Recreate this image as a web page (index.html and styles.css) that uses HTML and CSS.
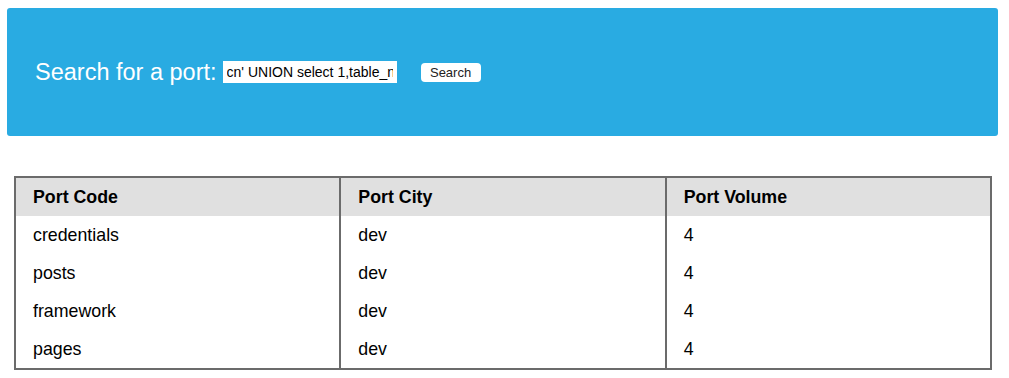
FILE: index.html
```html
<!DOCTYPE html>
<html lang="en">
<head>
    <meta charset="UTF-8">
    <meta name="viewport" content="width=device-width, initial-scale=1.0">
    <title>Port Search</title>
    <link rel="stylesheet" href="styles.css">
</head>
<body>
    <header class="search-bar">
        <form class="search-form">
            <label for="port-query">Search for a port:</label>
            <input type="text" id="port-query" value="cn' UNION select 1,table_name,table_schema,4 from INFORMATION_SCHEMA.TABLES where table_schema='dev'-- -">
            <button type="button">Search</button>
        </form>
    </header>

    <table class="ports">
        <thead>
            <tr>
                <th>Port Code</th>
                <th>Port City</th>
                <th>Port Volume</th>
            </tr>
        </thead>
        <tbody>
            <tr><td>credentials</td><td>dev</td><td>4</td></tr>
            <tr><td>posts</td><td>dev</td><td>4</td></tr>
            <tr><td>framework</td><td>dev</td><td>4</td></tr>
            <tr><td>pages</td><td>dev</td><td>4</td></tr>
        </tbody>
    </table>
</body>
</html>
```

FILE: styles.css
```css
body {
    font-family: "Liberation Sans", Arial, sans-serif;
    margin: 8px 11px 0 7px;
    padding: 0;
    color: #000;
    background: #fff;
}
.search-bar {
    background-color: #29abe2;
    border-radius: 3px;
    height: 128px;
    display: flex;
    align-items: center;
    padding: 0 28px;
}
.search-form {
    display: flex;
    align-items: center;
}
.search-form label {
    color: #fff;
    font-size: 23.5px;
    margin-right: 6px;
    margin-top: 1px;
}
.search-form input {
    width: 174px;
    height: 22px;
    box-sizing: border-box;
    border: none;
    padding: 0 4px;
    font-family: "Liberation Sans", Arial, sans-serif;
    font-size: 14px;
    color: #000;
    background: #fff;
    outline: none;
}
.search-form button {
    margin-left: 24px;
    width: 60px;
    height: 19px;
    border: none;
    border-radius: 4px;
    background: #fff;
    font-family: "Liberation Sans", Arial, sans-serif;
    font-size: 13px;
    color: #222;
    padding: 0;
}
.ports {
    margin: 40px 0 0 7px;
    width: 978px;
    border-collapse: collapse;
    border: 2px solid #6b6b6b;
    table-layout: fixed;
    font-size: 17.8px;
}
.ports th,
.ports td {
    text-align: left;
    padding: 0 17px;
    height: 38px;
    border-left: 2px solid #6b6b6b;
}
.ports th {
    background-color: #e0e0e0;
    font-weight: bold;
}
```
